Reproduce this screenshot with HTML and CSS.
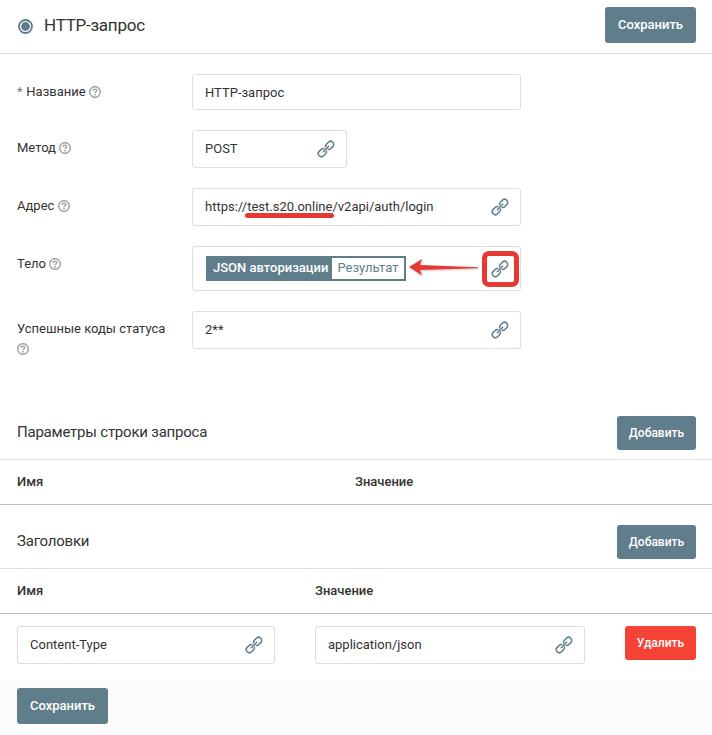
FILE: index.html
```html
<!DOCTYPE html>
<html lang="ru">
<head>
<meta charset="utf-8">
<title>HTTP-запрос</title>
<link rel="stylesheet" href="styles.css">
</head>
<body>
<svg class="defs" width="0" height="0" aria-hidden="true">
  <symbol id="link" viewBox="0 0 18 18">
    <g fill="none" stroke="#607d8b" stroke-width="1.5" transform="rotate(-45 9 9)">
      <path d="M8 7.7A3.1 3.1 0 0 0 5.3 5.9H2.5a3.1 3.1 0 0 0 0 6.2h2.8A3.1 3.1 0 0 0 8 10.3"/>
      <path d="M10 7.7a3.1 3.1 0 0 1 2.7-1.8h2.8a3.1 3.1 0 0 1 0 6.2h-2.8A3.1 3.1 0 0 1 10 10.3"/>
      <path d="M5.2 9h7.6" stroke-width="1.5" stroke-linecap="round"/>
    </g>
  </symbol>
  <symbol id="help" viewBox="0 0 12 12">
    <circle cx="6" cy="6" r="5.3" fill="none" stroke="#a6a6a6" stroke-width="1.5"/>
    <path d="M4.2 4.9C4.2 2.7 7.8 2.8 7.8 4.8 7.8 6 6 5.9 6 7.2" fill="none" stroke="#a6a6a6" stroke-width="1.5"/>
    <path d="M5.2 7.9h1.6v1.5H5.2z" fill="#a6a6a6"/>
  </symbol>
</svg>
<header class="top">
  <svg class="radio" viewBox="0 0 15 15"><circle cx="7.5" cy="7.5" r="6.5" fill="none" stroke="#607d8b" stroke-width="1.8"/><circle cx="7.5" cy="7.5" r="4.4" fill="#607d8b"/></svg>
  <h1>HTTP-запрос</h1>
  <button class="btn large">Сохранить</button>
</header>
<main class="form">
  <div class="row"><label><span class="req">*</span> Название <svg class="help"><use href="#help"/></svg></label><div class="input plain">HTTP-запрос</div></div>
  <div class="row"><label>Метод <svg class="help"><use href="#help"/></svg></label><div class="input short">POST<svg class="link"><use href="#link"/></svg></div></div>
  <div class="row"><label>Адрес <svg class="help"><use href="#help"/></svg></label><div class="input"><span>https://<span class="marked">test.s20.online</span>/v2api/auth/login</span><svg class="link"><use href="#link"/></svg></div></div>
  <div class="row"><label>Тело <svg class="help"><use href="#help"/></svg></label><div class="input tall"><span class="tag"><b>JSON авторизации</b><span>Результат</span></span><svg class="arrow" viewBox="0 0 72 20"><path d="M1 10 14 2 12 8 70 10.3v1L12 13 14 18.5z" fill="#e53935"/></svg><span class="ring"></span><svg class="link"><use href="#link"/></svg></div></div>
  <div class="row"><label>Успешные коды статуса <svg class="help"><use href="#help"/></svg></label><div class="input">2**<svg class="link"><use href="#link"/></svg></div></div>
</main>
<section>
  <div class="section-head"><h2>Параметры строки запроса</h2><button class="btn">Добавить</button></div>
  <div class="table-head params"><span>Имя</span><span>Значение</span></div>
</section>
<section class="headers">
  <div class="section-head"><h2>Заголовки</h2><button class="btn">Добавить</button></div>
  <div class="table-head cols"><span>Имя</span><span>Значение</span></div>
  <div class="table-row cols">
    <div class="input">Content-Type<svg class="link"><use href="#link"/></svg></div>
    <div class="input">application/json<svg class="link"><use href="#link"/></svg></div>
    <button class="btn danger">Удалить</button>
  </div>
</section>
<footer><button class="btn large">Сохранить</button></footer>
</body>
</html>
```
FILE: styles.css
```css
* { box-sizing: border-box; }
body {
  margin: 0;
  background: #fff;
  color: #333;
  font: 13px/20px Roboto, "Noto Sans", sans-serif;
}
.defs { position: absolute; }
h1, h2 { margin: 0; font-weight: 400; flex: 1; }
h1 { font-size: 17px; letter-spacing: -.25px; }
h2 { font-size: 15px; letter-spacing: -.22px; padding-bottom: 2px; }
.top {
  display: flex;
  align-items: center;
  height: 54px;
  padding: 0 16px 3px 18px;
  border-bottom: 1px solid #ddd;
}
.radio { width: 15px; height: 15px; margin: 2px 11px 0 0; }
.btn {
  width: 79px;
  height: 34px;
  padding: 0;
  border: 0;
  border-radius: 3px;
  background: #607d8b;
  color: #fff;
  font: 500 12px/34px Roboto, "Noto Sans", sans-serif;
}
.btn.large { width: 91px; height: 36px; font-size: 13px; }
.btn.danger { width: 71px; background: #f44336; }
.form { display: flex; flex-direction: column; gap: 20px; padding: 20px 17px 57px; }
.row { display: grid; grid-template-columns: 155px 329px; column-gap: 20px; }
.row label { padding-top: 8px; max-height: 38px; }
.req { margin-right: .5px; color: #607d8b; }
.help { width: 12px; height: 12px; vertical-align: -2px; }
.input {
  position: relative;
  display: flex;
  align-items: center;
  height: 38px;
  padding: 0 11px 0 12px;
  border: 1px solid #ddd;
  border-radius: 3px;
}
.input.plain { height: 36px; padding-top: 2px; }
.input.short { width: 155px; }
.input.tall { height: 45px; padding-left: 13px; }
.link { width: 18px; height: 18px; margin-left: auto; }
.marked { position: relative; }
.marked::after {
  content: "";
  position: absolute;
  left: -2px;
  right: -2px;
  bottom: -4px;
  height: 5px;
  border-radius: 3px;
  background: #e53935;
}
.tag { display: flex; height: 25px; border: 2px solid #607d8b; line-height: 20px; }
.tag b { padding: 0 4px 0 5px; background: #607d8b; color: #fff; font-weight: 500; }
.tag span { padding: 0 5px; color: #607d8b; }
.arrow { position: absolute; left: 215px; top: 10px; width: 72px; height: 20px; filter: drop-shadow(1px 1px 1px #0003); }
.ring { position: absolute; left: 289px; top: 4px; width: 37px; height: 36px; border: 5px solid #e53935; border-radius: 7px; }
.section-head {
  display: flex;
  align-items: center;
  height: 54px;
  padding: 0 16px 0 17px;
  border-bottom: 1px solid #ddd;
}
.table-head {
  display: grid;
  height: 45px;
  padding: 0 16px 0 17px;
  align-items: center;
  border-bottom: 1px solid #bbb;
  font-weight: 500;
}
.params { grid-template-columns: 338px 1fr; }
.headers { padding-top: 10px; }
.cols { grid-template-columns: 258px 270px 71px; column-gap: 40px; }
.table-row { display: grid; padding: 12px 16px 17px 17px; }
footer { height: 53px; padding: 7px 17px; background: #fcfcfc; }
```
